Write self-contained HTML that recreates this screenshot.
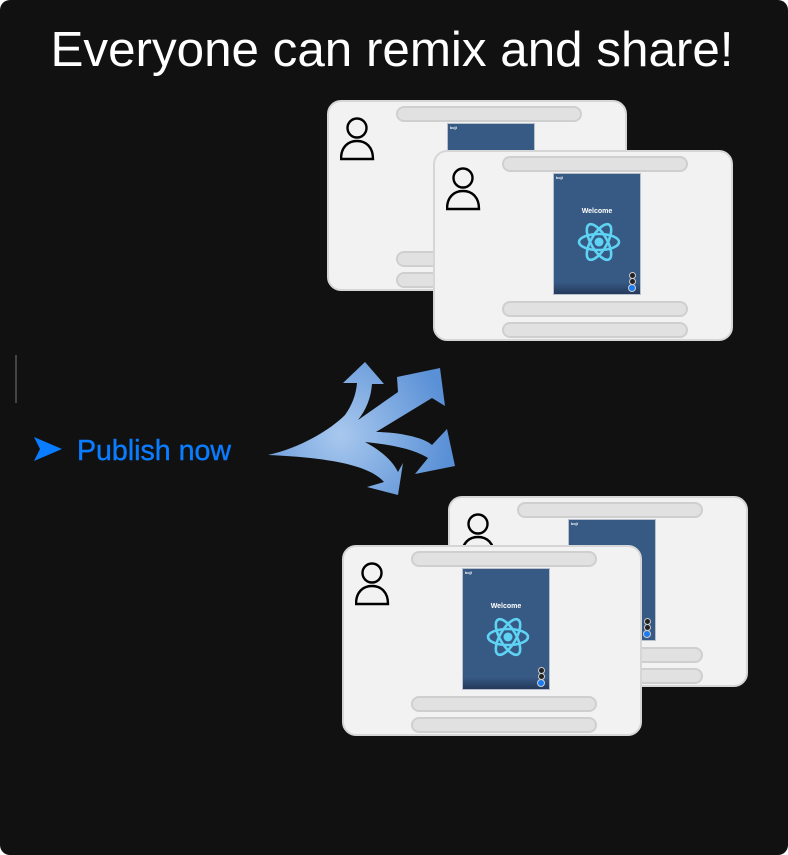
<!DOCTYPE html>
<html><head><meta charset="utf-8"><style>
html,body{margin:0;padding:0;background:#fff;}
#root{position:relative;width:788px;height:855px;background:#111;border-radius:10px;overflow:hidden;font-family:"Liberation Sans",sans-serif;}
.card{position:absolute;width:296px;height:187px;background:#f2f2f2;border:2px solid #d6d6d6;border-radius:14px;}
.bar{position:absolute;left:67px;width:182px;height:12px;background:#e1e1e1;border:2px solid #cfcfcf;border-radius:9px;}
.ph{position:absolute;left:118px;top:21px;width:88px;height:122px;background:#375a85;border:1px solid #b8c0cc;box-sizing:border-box;overflow:hidden;}
.ph .k{position:absolute;left:2px;top:1px;color:#fff;font-size:4px;font-weight:bold;}
.ph .w{position:absolute;left:0;right:0;top:34px;text-align:center;color:#fff;font-size:7px;font-weight:bold;}
.ph .bot{position:absolute;left:0;right:0;bottom:0;height:12px;background:linear-gradient(#375a85,#24395a);}
.ph .d{position:absolute;right:4px;width:5px;height:5px;border-radius:50%;background:#222;border:1px solid #ccc;}
.pers{position:absolute;left:11px;top:15px;}
</style></head><body><div id="root">
<svg style="position:absolute;left:0;top:0" width="788" height="100"><text x="392" y="66" text-anchor="middle" fill="#fff" font-family="Liberation Sans, sans-serif" font-size="47" textLength="683" lengthAdjust="spacingAndGlyphs" transform="translate(392 66) scale(1 1.05) translate(-392 -66)">Everyone can remix and share!</text></svg>

<div style="position:absolute;left:15px;top:355px;width:2px;height:48px;background:#444"></div>

<svg style="position:absolute;left:34px;top:437px" width="30" height="26"><path d="M0 0 L28 12 L0 24 L6 12 Z" fill="#0a7cff"/></svg>
<svg style="position:absolute;left:74px;top:430px" width="170" height="40"><text x="3" y="30" fill="#0a7cff" font-family="Liberation Sans, sans-serif" font-size="29" textLength="154" lengthAdjust="spacingAndGlyphs" stroke="#0a7cff" stroke-width="0.4">Publish now</text></svg>

<svg style="position:absolute;left:260px;top:355px" width="200" height="145" viewBox="260 355 200 145">
<defs><radialGradient id="g" cx="340" cy="435" r="110" gradientUnits="userSpaceOnUse"><stop offset="0" stop-color="#a8c8ee"/><stop offset="1" stop-color="#5a90d6"/></radialGradient></defs>
<g fill="url(#g)">
<path d="M268 455 C300 448 330 430 345 415 C352 405 356 395 357 383 L343 383 L365 362 L384 384 L372 384 C371 398 366 410 358 420 L398 392 L397 377 L440 368 L445 406 L432 398 L376 432 C400 432 425 438 432 445 L447 429 L455 466 L415 474 L428 458 C415 450 395 445 365 442 C380 450 392 460 398 472 L403 463 L398 495 L367 487 L384 482 C372 468 340 458 268 455 Z"/>
</g></svg>

<div class="card" style="left:327px;top:100px">
<div class="bar" style="top:4px"></div>
<svg class="pers" width="40" height="45"><circle cx="17" cy="11" r="9.5" fill="none" stroke="#000" stroke-width="2.4"/><path d="M1 42 C1 30 8 24 17 24 C26 24 33 30 33 42 Z" fill="none" stroke="#000" stroke-width="2.4"/></svg>
<div class="ph"><span class="k">koji</span></div>
<div class="bar" style="top:149px"></div><div class="bar" style="top:170px"></div>
</div>

<div class="card" style="left:433px;top:150px">
<div class="bar" style="top:4px"></div>
<svg class="pers" width="40" height="45"><circle cx="17" cy="11" r="9.5" fill="none" stroke="#000" stroke-width="2.4"/><path d="M1 42 C1 30 8 24 17 24 C26 24 33 30 33 42 Z" fill="none" stroke="#000" stroke-width="2.4"/></svg>
<div class="ph"><span class="k">koji</span><div class="w">Welcome</div>
<svg style="position:absolute;left:23px;top:45px" width="44" height="46" viewBox="-22 -23 44 46"><g fill="none" stroke="#5fd3f3" stroke-width="2.6"><ellipse rx="20" ry="8"/><ellipse rx="20" ry="8" transform="rotate(60)"/><ellipse rx="20" ry="8" transform="rotate(120)"/></g><circle r="4.5" fill="#5fd3f3"/></svg>
<div class="bot"></div><div class="d" style="top:98px"></div><div class="d" style="top:104px"></div><div class="d" style="top:110px;background:#1a7cf0;width:6px;height:6px"></div></div>
<div class="bar" style="top:149px"></div><div class="bar" style="top:170px"></div>
</div>

<div class="card" style="left:448px;top:496px">
<div class="bar" style="top:4px"></div>
<svg class="pers" width="40" height="45"><circle cx="17" cy="11" r="9.5" fill="none" stroke="#000" stroke-width="2.4"/><path d="M1 42 C1 30 8 24 17 24 C26 24 33 30 33 42 Z" fill="none" stroke="#000" stroke-width="2.4"/></svg>
<div class="ph"><span class="k">koji</span><div class="d" style="top:98px"></div><div class="d" style="top:104px"></div><div class="d" style="top:110px;background:#1a7cf0;width:6px;height:6px"></div></div>
<div class="bar" style="top:149px"></div><div class="bar" style="top:170px"></div>
</div>

<div class="card" style="left:342px;top:545px">
<div class="bar" style="top:4px"></div>
<svg class="pers" width="40" height="45"><circle cx="17" cy="11" r="9.5" fill="none" stroke="#000" stroke-width="2.4"/><path d="M1 42 C1 30 8 24 17 24 C26 24 33 30 33 42 Z" fill="none" stroke="#000" stroke-width="2.4"/></svg>
<div class="ph"><span class="k">koji</span><div class="w">Welcome</div>
<svg style="position:absolute;left:23px;top:45px" width="44" height="46" viewBox="-22 -23 44 46"><g fill="none" stroke="#5fd3f3" stroke-width="2.6"><ellipse rx="20" ry="8"/><ellipse rx="20" ry="8" transform="rotate(60)"/><ellipse rx="20" ry="8" transform="rotate(120)"/></g><circle r="4.5" fill="#5fd3f3"/></svg>
<div class="bot"></div><div class="d" style="top:98px"></div><div class="d" style="top:104px"></div><div class="d" style="top:110px;background:#1a7cf0;width:6px;height:6px"></div></div>
<div class="bar" style="top:149px"></div><div class="bar" style="top:170px"></div>
</div>
</div></body></html>
